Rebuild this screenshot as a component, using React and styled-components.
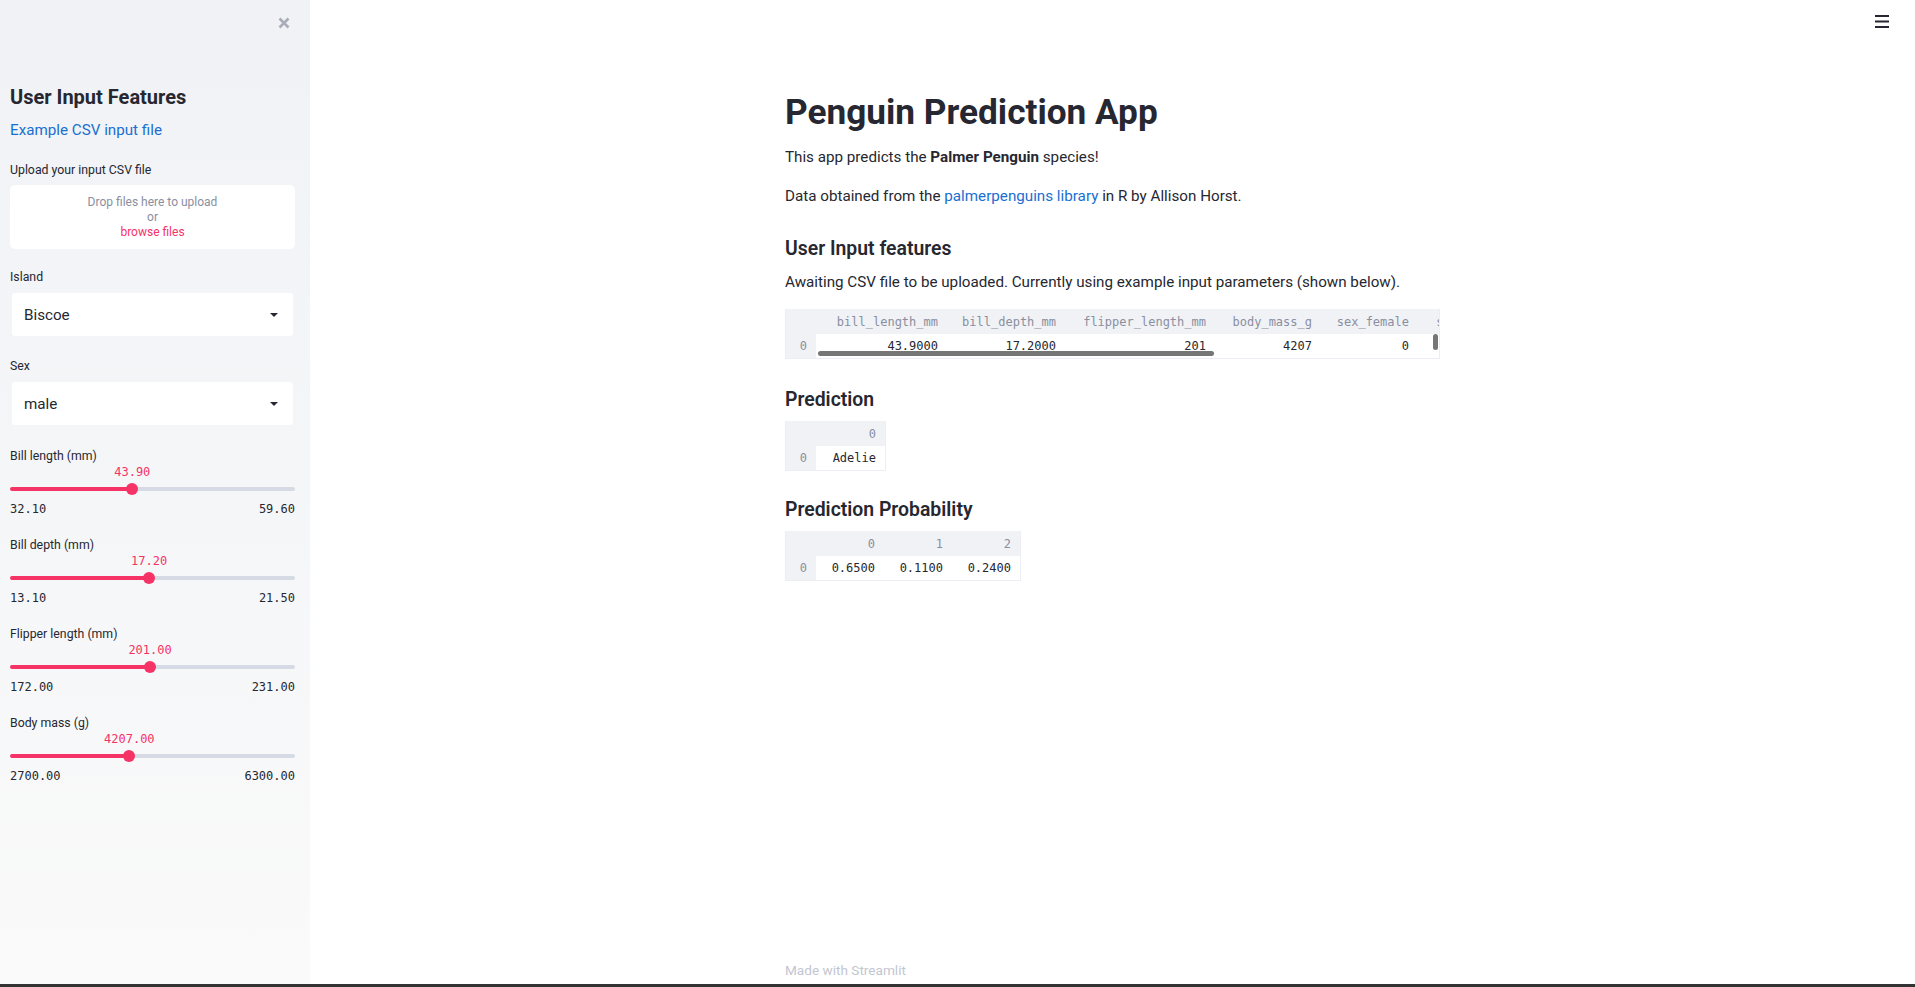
import React from "react";
import styled, { createGlobalStyle } from "styled-components";

const SANS = `Roboto, "Noto Sans", "Liberation Sans", sans-serif`;
const MONO = `"DejaVu Sans Mono", "Liberation Mono", monospace`;
const PINK = "#f63366";
const TEXT = "#262730";

const Global = createGlobalStyle`
  html, body { margin: 0; padding: 0; height: 100%; }
  body { font-family: ${SANS}; color: ${TEXT}; background: #fff; overflow: hidden; }
  #root { height: 100%; }
  *, *::before, *::after { box-sizing: border-box; }
`;

const Page = styled.div`
  height: 100vh;
  display: flex;
  flex-direction: column;
`;
const Body = styled.div`
  flex: 1;
  display: flex;
  min-height: 0;
`;
const BottomBar = styled.div`
  height: 3px;
  flex-shrink: 0;
  background: #333;
`;

/* ---------- Sidebar ---------- */
const Sidebar = styled.aside`
  width: 310px;
  flex-shrink: 0;
  background-image: linear-gradient(180deg, #f0f2f6, #fafafa);
  padding: 0 15px 0 10px;
  display: flex;
  flex-direction: column;
`;
const SidebarTop = styled.div`
  height: 46px;
  display: flex;
  justify-content: flex-end;
  align-items: center;
  padding-right: 5px;
`;
const CloseButton = styled.button`
  border: 0;
  background: none;
  padding: 0;
  width: 12px;
  height: 12px;
  display: flex;
  cursor: pointer;
`;
const SideTitle = styled.h2`
  margin: 39px 0 0;
  font-size: 20px;
  line-height: 24px;
  font-weight: 700;
  color: ${TEXT};
`;
const SideLink = styled.a`
  margin-top: 9px;
  font-size: 15.2px;
  line-height: 24px;
  color: #1a6fd0;
  text-decoration: none;
`;
const Field = styled.div`
  display: flex;
  flex-direction: column;
  gap: ${(p) => p.$gap ?? 0}px;
  margin-top: ${(p) => p.$mt ?? 0}px;
`;
const FieldLabel = styled.label`
  font-size: 12.3px;
  line-height: 16px;
  color: ${TEXT};
`;
const Dropzone = styled.div`
  height: 64px;
  background: #fff;
  border-radius: 5px;
  display: flex;
  flex-direction: column;
  align-items: center;
  justify-content: center;
  font-size: 12px;
  line-height: 15px;
  color: #8a8fa0;
`;
const Browse = styled.span`
  color: ${PINK};
`;
const Select = styled.div`
  margin: 0 2px;
  height: 43px;
  background: #fff;
  border-radius: 3px;
  display: flex;
  align-items: center;
  justify-content: space-between;
  padding: 0 15px 0 12px;
  font-size: 15.2px;
  color: ${TEXT};
`;
const Caret = styled.span`
  width: 0;
  height: 0;
  border-left: 4px solid transparent;
  border-right: 4px solid transparent;
  border-top: 4px solid ${TEXT};
`;
const ValueRow = styled.div`
  position: relative;
  height: 16px;
`;
const ValueText = styled.span`
  position: absolute;
  top: 0;
  transform: translateX(-50%);
  font-family: ${MONO};
  font-size: 12px;
  line-height: 16px;
  color: ${PINK};
  white-space: nowrap;
`;
const TrackRow = styled.div`
  position: relative;
  height: 18px;
  display: flex;
  align-items: center;
`;
const Track = styled.div`
  width: 100%;
  height: 4px;
  border-radius: 2px;
`;
const Thumb = styled.span`
  position: absolute;
  top: 50%;
  width: 12px;
  height: 12px;
  border-radius: 50%;
  background: ${PINK};
  transform: translate(-50%, -50%);
`;
const MinMax = styled.div`
  margin-top: 3px;
  display: flex;
  justify-content: space-between;
  font-family: ${MONO};
  font-size: 12px;
  line-height: 16px;
  color: ${TEXT};
`;

function Slider({ label, min, max, value, first }) {
  const pct = ((value - min) / (max - min)) * 100;
  return (
    <Field $mt={first ? 23 : 20}>
      <FieldLabel>{label}</FieldLabel>
      <ValueRow>
        <ValueText style={{ left: `${pct}%` }}>{value.toFixed(2)}</ValueText>
      </ValueRow>
      <TrackRow>
        <Track
          style={{
            background: `linear-gradient(to right, ${PINK} ${pct}%, #d5dae5 ${pct}%)`,
          }}
        />
        <Thumb style={{ left: `${pct}%` }} />
      </TrackRow>
      <MinMax>
        <span>{min.toFixed(2)}</span>
        <span>{max.toFixed(2)}</span>
      </MinMax>
    </Field>
  );
}

/* ---------- Main ---------- */
const Main = styled.main`
  flex: 1;
  min-width: 0;
  display: flex;
  flex-direction: column;
`;
const TopBar = styled.div`
  height: 43px;
  display: flex;
  justify-content: flex-end;
  align-items: center;
  padding-right: 26px;
`;
const MenuButton = styled.button`
  border: 0;
  background: none;
  padding: 0;
  display: flex;
  cursor: pointer;
`;
const Content = styled.div`
  width: 655px;
  margin: 0 auto;
  flex: 1;
  display: flex;
  flex-direction: column;
`;
const Title = styled.h1`
  margin: 48px 0 0;
  font-size: 35.2px;
  line-height: 43px;
  font-weight: 700;
  color: ${TEXT};
`;
const Para = styled.p`
  margin: ${(p) => p.$mt}px 0 0;
  font-size: 15.2px;
  line-height: 24px;
  color: ${TEXT};
`;
const Link = styled.a`
  color: #1a6fd0;
  text-decoration: none;
`;
const SubHeading = styled.h3`
  margin: ${(p) => p.$mt}px 0 0;
  font-size: 19.4px;
  line-height: 24px;
  font-weight: 600;
  color: ${TEXT};
`;
const TableWrap = styled.div`
  position: relative;
  margin-top: ${(p) => p.$mt}px;
  align-self: flex-start;
  max-width: 100%;
  width: ${(p) => (p.$full ? "100%" : "auto")};
  overflow: hidden;
  background: #f0f2f6;
  border: 1px solid #eceef3;
  border-top: 0;
`;
const Table = styled.table`
  border-collapse: collapse;
  table-layout: fixed;
  font-family: ${MONO};
  font-size: 12px;
`;
const Th = styled.th`
  width: ${(p) => p.$w}px;
  min-width: ${(p) => p.$w}px;
  height: 25px;
  padding: 0 9px 0 0;
  text-align: right;
  font-weight: 400;
  color: #8a8fa0;
  background: #f0f2f6;
  white-space: nowrap;
  overflow: hidden;
`;
const IndexCell = styled.th`
  height: 24px;
  padding: 0 9px 0 0;
  text-align: right;
  font-weight: 400;
  color: #8a8fa0;
  background: #f0f2f6;
`;
const Td = styled.td`
  height: 24px;
  padding: 0 9px 0 0;
  text-align: right;
  color: ${TEXT};
  background: #fff;
  white-space: nowrap;
  overflow: hidden;
`;
const HScroll = styled.div`
  position: absolute;
  left: 32px;
  bottom: 2px;
  width: 396px;
  height: 5px;
  border-radius: 3px;
  background: #767676;
`;
const VScroll = styled.div`
  position: absolute;
  right: 1px;
  top: 25px;
  width: 5px;
  height: 16px;
  border-radius: 3px;
  background: #767676;
`;
const Footer = styled.div`
  margin-top: auto;
  padding-bottom: 6px;
  font-size: 13.6px;
  line-height: 16px;
  color: #c3c6d1;
`;

function DataTable({ columns, widths, row, full, scrollbars, mt = 9 }) {
  return (
    <TableWrap $full={full} $mt={mt}>
      <Table>
        <thead>
          <tr>
            <Th $w={30} />
            {columns.map((c, i) => (
              <Th key={c} $w={widths[i]}>
                {c}
              </Th>
            ))}
          </tr>
        </thead>
        <tbody>
          <tr>
            <IndexCell>0</IndexCell>
            {row.map((v, i) => (
              <Td key={i}>{v}</Td>
            ))}
          </tr>
        </tbody>
      </Table>
      {scrollbars && (
        <>
          <HScroll />
          <VScroll />
        </>
      )}
    </TableWrap>
  );
}

export default function App() {
  return (
    <Page>
      <Global />
      <Body>
        <Sidebar>
          <SidebarTop>
            <CloseButton aria-label="Close sidebar">
              <svg width="12" height="12" viewBox="0 0 12 12">
                <path
                  d="M1.5 1.5 L10.5 10.5 M10.5 1.5 L1.5 10.5"
                  stroke="#a9adb8"
                  strokeWidth="2.6"
                  strokeLinecap="butt"
                />
              </svg>
            </CloseButton>
          </SidebarTop>
          <SideTitle>User Input Features</SideTitle>
          <SideLink href="#">Example CSV input file</SideLink>
          <Field $mt={20} $gap={7}>
            <FieldLabel>Upload your input CSV file</FieldLabel>
            <Dropzone>
              <span>Drop files here to upload</span>
              <span>or</span>
              <Browse>browse files</Browse>
            </Dropzone>
          </Field>
          <Field $mt={20} $gap={8}>
            <FieldLabel>Island</FieldLabel>
            <Select>
              <span>Biscoe</span>
              <Caret />
            </Select>
          </Field>
          <Field $mt={22} $gap={8}>
            <FieldLabel>Sex</FieldLabel>
            <Select>
              <span>male</span>
              <Caret />
            </Select>
          </Field>
          <Slider first label="Bill length (mm)" min={32.1} max={59.6} value={43.9} />
          <Slider label="Bill depth (mm)" min={13.1} max={21.5} value={17.2} />
          <Slider label="Flipper length (mm)" min={172} max={231} value={201} />
          <Slider label="Body mass (g)" min={2700} max={6300} value={4207} />
        </Sidebar>
        <Main>
          <TopBar>
            <MenuButton aria-label="Menu">
              <svg width="14" height="13" viewBox="0 0 14 13">
                <rect x="0" y="0" width="14" height="2" fill={TEXT} />
                <rect x="0" y="5.5" width="14" height="2" fill={TEXT} />
                <rect x="0" y="11" width="14" height="2" fill={TEXT} />
              </svg>
            </MenuButton>
          </TopBar>
          <Content>
            <Title>Penguin Prediction App</Title>
            <Para $mt={11}>
              This app predicts the <b>Palmer Penguin</b> species!
            </Para>
            <Para $mt={15}>
              Data obtained from the <Link href="#">palmerpenguins library</Link> in R by
              Allison Horst.
            </Para>
            <SubHeading $mt={29}>User Input features</SubHeading>
            <Para $mt={9}>
              Awaiting CSV file to be uploaded. Currently using example input parameters
              (shown below).
            </Para>
            <DataTable
              full
              scrollbars
              mt={15}
              columns={[
                "bill_length_mm",
                "bill_depth_mm",
                "flipper_length_mm",
                "body_mass_g",
                "sex_female",
                "sex_male",
              ]}
              widths={[131, 118, 150, 106, 97, 85]}
              row={["43.9000", "17.2000", "201", "4207", "0", "1"]}
            />
            <SubHeading $mt={29}>Prediction</SubHeading>
            <DataTable columns={["0"]} widths={[69]} row={["Adelie"]} />
            <SubHeading $mt={27}>Prediction Probability</SubHeading>
            <DataTable
              columns={["0", "1", "2"]}
              widths={[68, 68, 68]}
              row={["0.6500", "0.1100", "0.2400"]}
            />
            <Footer>Made with Streamlit</Footer>
          </Content>
        </Main>
      </Body>
      <BottomBar />
    </Page>
  );
}
